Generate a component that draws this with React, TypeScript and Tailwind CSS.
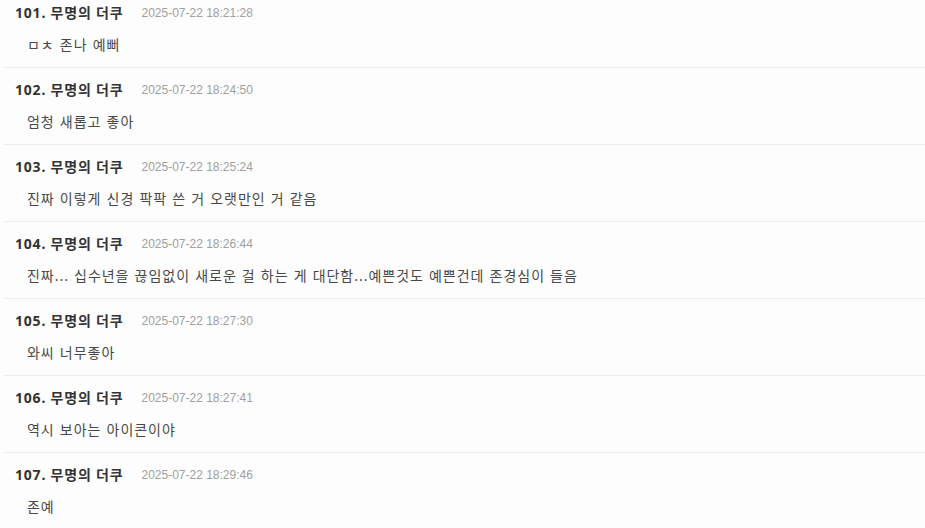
import React from "react";

const items = [
  { n: 101, date: "2025-07-22 18:21:28", text: "ㅁㅊ 존나 예뻐" },
  { n: 102, date: "2025-07-22 18:24:50", text: "엄청 새롭고 좋아" },
  { n: 103, date: "2025-07-22 18:25:24", text: "진짜 이렇게 신경 팍팍 쓴 거 오랫만인 거 같음" },
  { n: 104, date: "2025-07-22 18:26:44", text: "진짜... 십수년을 끊임없이 새로운 걸 하는 게 대단함...예쁜것도 예쁜건데 존경심이 들음" },
  { n: 105, date: "2025-07-22 18:27:30", text: "와씨 너무좋아" },
  { n: 106, date: "2025-07-22 18:27:41", text: "역시 보아는 아이콘이야" },
  { n: 107, date: "2025-07-22 18:29:46", text: "존예" },
];

export default function App() {
  return (
    <div
      className="w-[925px] h-[528px] overflow-hidden bg-[#fdfdfd]"
      style={{ fontFamily: '"Noto Sans", "Noto Sans CJK KR", sans-serif' }}
    >
      <div className="-mt-[9px] ml-[4px]">
        {items.map((it) => (
          <div key={it.n} className="border-b border-[#eeeeee] pl-[11px] pt-[12px] pb-[12px]">
            <div className="flex items-center h-[20px]">
              <span className="text-[14px] font-bold text-[#333333] leading-[20px] tracking-[0.8px]">
                {it.n}. 무명의 더쿠
              </span>
              <span
                className="ml-[18px] text-[12px] text-[#a0a0a0] leading-[20px]"
                style={{ fontFamily: '"Liberation Sans", sans-serif' }}
              >
                {it.date}
              </span>
            </div>
            <div className="mt-[12px] pl-[12px] text-[14px] text-[#484848] leading-[20px] h-[20px] tracking-[0.98px] [word-spacing:0.5px]">
              {it.text}
            </div>
          </div>
        ))}
      </div>
    </div>
  );
}
